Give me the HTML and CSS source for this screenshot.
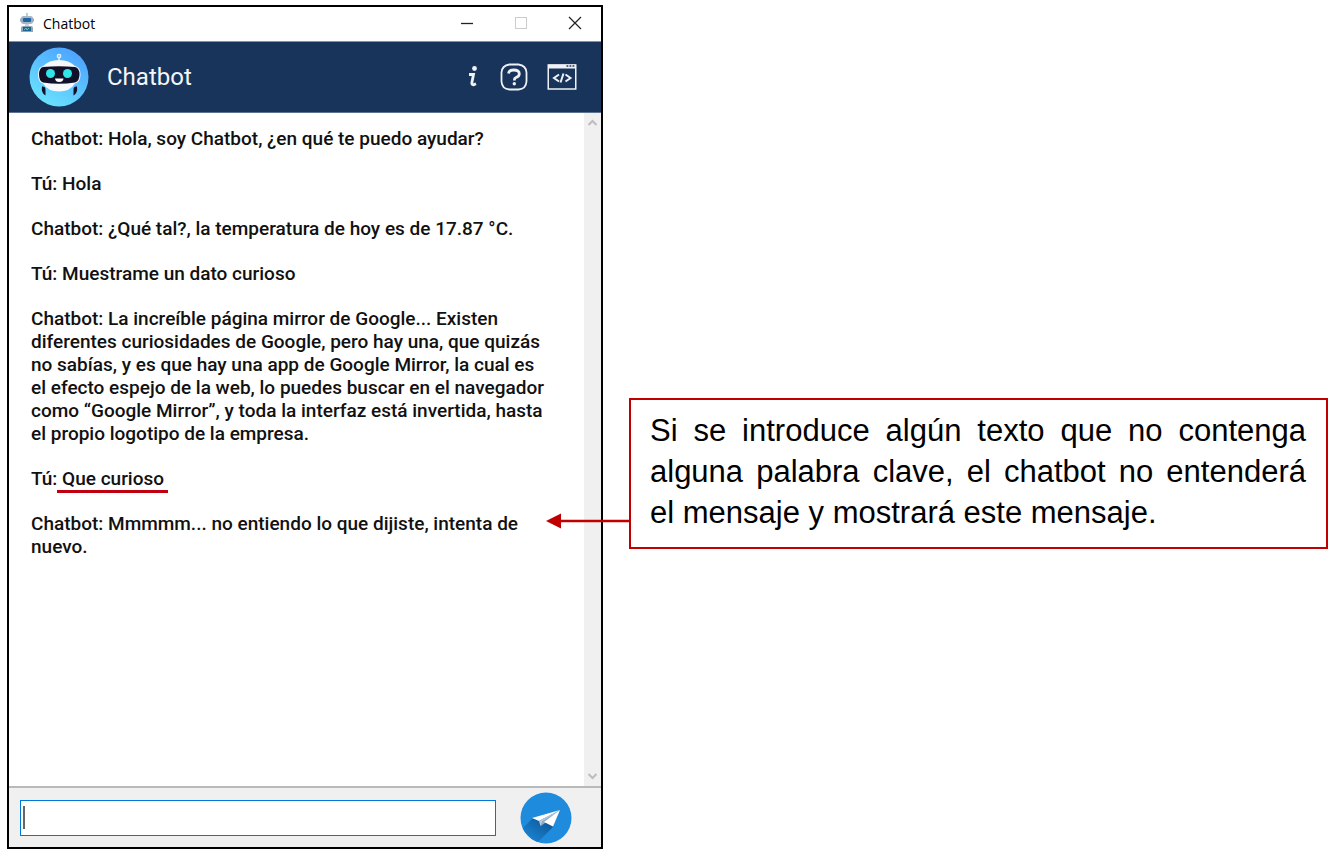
FILE: index.html
```html
<!DOCTYPE html>
<html lang="es">
<head>
<meta charset="utf-8">
<title>Chatbot</title>
<link rel="stylesheet" href="styles.css">
</head>
<body>
<main class="page">
  <section class="window" aria-label="Chatbot">
    <div class="titlebar">
      <svg class="app-icon" width="14" height="20" viewBox="0 0 14 20" aria-hidden="true">
        <path d="M7 0v4" stroke="#8fc4dc" stroke-width="1.5"/>
        <rect x="1" y="3" width="12" height="8" rx="2.5" fill="#a9b6c6"/>
        <rect x="0" y="5" width="14" height="4" rx="1.5" fill="#9aabc0"/>
        <rect x="3" y="5" width="8" height="4" rx="1" fill="#1f66a5"/>
        <rect x="5" y="11" width="4" height="2" fill="#cdd5df"/>
        <path d="M1 19v-4q0-2 2-2h8q2 0 2 2v4z" fill="#95a5b9"/>
        <rect x="3" y="14" width="8" height="4" fill="#1d6596"/>
        <path d="M4 17l2-2 1 2 2-2" stroke="#71c4b5" fill="none"/>
      </svg>
      <span class="app-name">Chatbot</span>
      <div class="controls">
        <button type="button" aria-label="Minimizar"><svg width="14" height="14" viewBox="0 0 14 14"><path d="M1 7.500h12" stroke="#222" stroke-width="1.300"/></svg></button>
        <button type="button" aria-label="Maximizar" disabled><svg width="14" height="14" viewBox="0 0 14 14"><rect x="1.500" y="1.500" width="11" height="11" fill="none" stroke="#ccc"/></svg></button>
        <button type="button" aria-label="Cerrar"><svg width="14" height="14" viewBox="0 0 14 14"><path d="M1 1l12 12M13 1L1 13" stroke="#222" stroke-width="1.200"/></svg></button>
      </div>
    </div>

    <header class="header">
      <svg class="avatar" width="60" height="60" viewBox="0 0 60 60" aria-hidden="true">
        <defs>
          <linearGradient id="sky" x1="0.2" y1="1" x2="0.8" y2="0">
            <stop offset="0" stop-color="#6be6ff"/>
            <stop offset="1" stop-color="#4c9fff"/>
          </linearGradient>
        </defs>
        <circle cx="30" cy="30" r="29.500" fill="url(#sky)"/>
        <path d="M30 10v6" stroke="#e4f6ff" stroke-width="1.400"/>
        <circle cx="30" cy="9" r="1.800" fill="#8fd0ff" stroke="#e4f6ff" stroke-width="1.100"/>
        <path d="M14 19Q20 13 30 13T46 19Q51.500 20 51.500 27.500T46 36.500Q41 44.500 30 44.500T14 36.500Q9 35 9 27.500T14 19z" fill="#f6f8fc"/>
        <path d="M14 20Q30 18.500 46 20Q50.500 21 50.500 27.500T46 35.500Q30 38 14 35.500Q10 34 10 27.500T14 20z" fill="#11112a"/>
        <circle cx="21.500" cy="26.500" r="4.500" fill="#30e4e8"/>
        <circle cx="38.500" cy="26.500" r="4.500" fill="#30e4e8"/>
        <path d="M26 31.500h8.500q-.5 3.500-4.250 3.500T26 31.500z" fill="#fff"/>
        <path d="M13 39.500q3.500-.5 3.500 3v6q-4.500-2.500-3.500-9zM48 39.500q-3.500-.5-3.500 3v6q4.500-2.500 3.500-9z" fill="#11112a"/>
      </svg>
      <h1 class="name">Chatbot</h1>
      <nav class="actions" aria-label="Opciones">
        <button type="button" aria-label="Información"><svg width="14" height="28" viewBox="0 0 14 28"><circle cx="7.500" cy="5.500" r="2.400" fill="#eef1f5"/><path d="M2 11.500H6.500L4.900 19.500Q4.500 22 6.500 21.800L9 20.800" fill="none" stroke="#eef1f5" stroke-width="2.800"/></svg></button>
        <button type="button" aria-label="Ayuda"><svg width="28" height="28" viewBox="0 0 28 28" fill="none" stroke="#eef1f5"><path d="M9.500 1.500h9Q26 2.500 26.500 9.500v9Q26 26 18.500 26.500h-9Q2 26 1.500 18.500v-9Q2 2.500 9.500 1.500z" stroke-width="1.800" stroke-linejoin="round"/><path d="M8.500 10.500Q9 7 13.500 7Q19.500 7 19.300 11Q19.200 13.500 16 14.500Q14.300 15.200 14.300 17.500" stroke-width="2.800"/><circle cx="14.300" cy="20.800" r="1.700" fill="#eef1f5" stroke="none"/></svg></button>
        <button type="button" aria-label="Código"><svg width="30" height="28" viewBox="0 0 30 28" fill="none" stroke="#eef1f5"><rect x="1.250" y="2" width="27.500" height="24" stroke-width="1.500"/><path d="M1 3.500h28" stroke-width="4"/><path d="M19.500 3h1.800m1.200 0h1.800m1.200 0h1.800" stroke="#18345a" stroke-width="1.500"/><path d="M12 11.500l-5 3.500 5 3.500M18.500 11.500l5 3.500-5 3.500M16.500 10.500l-3 9" stroke-width="2"/></svg></button>
      </nav>
    </header>

    <div class="chat">
      <div class="messages">
        <p>Chatbot: Hola, soy Chatbot, ¿en qué te puedo ayudar?</p>
        <p>Tú: Hola</p>
        <p>Chatbot: ¿Qué tal?, la temperatura de hoy es de 17.87 °C.</p>
        <p>Tú: Muestrame un dato curioso</p>
        <p>Chatbot: La increíble página mirror de Google... Existen<br>diferentes curiosidades de Google, pero hay una, que quizás<br>no sabías, y es que hay una app de Google Mirror, la cual es<br>el efecto espejo de la web, lo puedes buscar en el navegador<br>como “Google Mirror”, y toda la interfaz está invertida, hasta<br>el propio logotipo de la empresa.</p>
        <p>Tú:<span class="marked"> Que curioso</span></p>
        <p>Chatbot: Mmmmm... no entiendo lo que dijiste, intenta de<br>nuevo.</p>
      </div>
      <div class="scrollbar" aria-hidden="true">
        <svg width="17" height="17" viewBox="0 0 17 17"><path d="M4.500 12l4-4 4 4" fill="none" stroke="#bdbdbd" stroke-width="2"/></svg>
        <svg width="17" height="17" viewBox="0 0 17 17"><path d="M4.500 5l4 4 4-4" fill="none" stroke="#bdbdbd" stroke-width="2"/></svg>
      </div>
    </div>

    <form class="composer">
      <div class="field">
        <input class="entry" type="text" aria-label="Mensaje">
        <span class="caret"></span>
      </div>
      <button class="send" type="button" aria-label="Enviar">
        <svg width="52" height="52" viewBox="0 0 52 52">
          <defs>
            <linearGradient id="shade" x1="0.9" y1="0.1" x2="0.2" y2="0.9">
              <stop offset="0" stop-color="#0d5795"/>
              <stop offset="1" stop-color="#1b86d8"/>
            </linearGradient>
            <clipPath id="disc"><circle cx="26" cy="26" r="25.500"/></clipPath>
          </defs>
          <circle cx="26" cy="26" r="25.500" fill="#1e8bdd"/>
          <path d="M13 26L2 37l14 15 17-17-3-9z" fill="url(#shade)" clip-path="url(#disc)"/>
          <path d="M12 26L40 18 19 29z" fill="#fff"/>
          <path d="M19 29l1.500 5L25 30 40 18z" fill="#b8cbdc"/>
          <path d="M20.500 34l1.500-4.500L40 18 25 31z" fill="#8daac3"/>
          <path d="M24 30L40 18 33 34.500z" fill="#fff"/>
        </svg>
      </button>
    </form>
  </section>

  <aside class="callout">
    <svg class="arrow" width="85" height="16" viewBox="0 0 85 16" aria-hidden="true"><path d="M14 8h71" stroke="#c00000" stroke-width="2.500"/><path d="M0 8L15 .5v15z" fill="#c00000"/></svg>
    <p>Si se introduce algún texto que no contenga alguna palabra clave, el chatbot no entenderá el mensaje y mostrará este mensaje.</p>
  </aside>
</main>
</body>
</html>
```
FILE: styles.css
```css
* {
  box-sizing: border-box;
}

body {
  margin: 0;
  background: #fff;
  color: #000;
}

p,
h1 {
  margin: 0;
}

button {
  display: flex;
  padding: 0;
  border: 0;
  background: none;
}

.page {
  display: grid;
  grid-template-columns: 596fr 699fr;
  gap: 26px;
  min-height: 100vh;
  padding: 5px 7px 7px;
}

.window {
  display: flex;
  flex-direction: column;
  border: 2px solid #000;
  font-family: Roboto, sans-serif;
}

.titlebar {
  display: flex;
  align-items: center;
  height: 34px;
  padding: 0 19px 2px 11px;
}

.app-name {
  margin-left: 9px;
  font: 14px "Open Sans", sans-serif;
}

.controls {
  display: flex;
  gap: 40px;
  margin-left: auto;
}

.header {
  display: flex;
  align-items: center;
  height: 72px;
  padding: 0 24px 0 20px;
  background: #18345a;
  border-top: 1px solid #8291a7;
  border-bottom: 1px solid #5d7291;
  color: #f4f6f9;
}

.name {
  margin-left: 18px;
  font-size: 24px;
  font-weight: 400;
}

.actions {
  display: flex;
  gap: 19px;
  margin-left: auto;
}

.chat {
  display: flex;
  flex: 1;
}

.messages {
  display: flex;
  flex: 1;
  flex-direction: column;
  gap: 22px;
  padding: 14px 0 0 22px;
  font-size: 19px;
  font-weight: 500;
  line-height: 23px;
  color: #111;
  white-space: nowrap;
}

.marked {
  padding-right: 4px;
  border-bottom: 3px solid #c00010;
}

.scrollbar {
  display: flex;
  flex-direction: column;
  justify-content: space-between;
  background: #f0f0f0;
}

.composer {
  display: flex;
  align-items: center;
  gap: 24px;
  padding: 4px 29px 3px 11px;
  background: #f0f0f0;
  border-top: 2px solid #b9b9b9;
}

.field {
  position: relative;
  flex: 1;
}

.entry {
  display: block;
  width: 100%;
  height: 36px;
  padding: 0 5px;
  border: 1px solid #0078d7;
  outline: 0;
  background: #fff;
  font: 18px Roboto, sans-serif;
}

.caret {
  position: absolute;
  top: 6px;
  left: 3px;
  width: 2px;
  height: 23px;
  background: #666;
}

.callout {
  position: relative;
  align-self: start;
  margin-top: 393px;
  padding: 10px 20px 14px 19px;
  border: 2px solid #c00000;
  font-family: "Liberation Sans", Arial, sans-serif;
  font-size: 31px;
  line-height: 41px;
  text-align: justify;
}

.arrow {
  position: absolute;
  top: 113px;
  right: 100%;
}
```
